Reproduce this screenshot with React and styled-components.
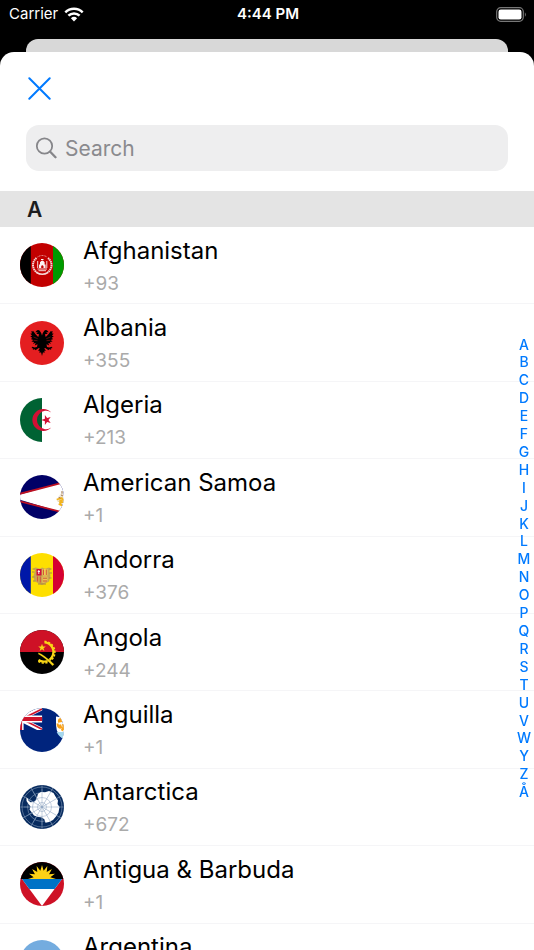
import React, { useState } from 'react';
import styled, { createGlobalStyle } from 'styled-components';

const GlobalStyle = createGlobalStyle`
  * {
    box-sizing: border-box;
  }

  body {
    margin: 0;
    background: #000;
    font-family: Inter, 'Liberation Sans', sans-serif;
    -webkit-font-smoothing: antialiased;
  }

  button, input {
    font-family: inherit;
  }
`;

const Screen = styled.div`
  display: flex;
  flex-direction: column;
  height: 100vh;
  overflow: hidden;
  background: #000;
`;

const StatusBar = styled.header`
  display: grid;
  grid-template-columns: 1fr auto 1fr;
  align-items: center;
  flex: none;
  height: 39px;
  padding: 0 7px 11px 9px;
  color: #fff;
  font-size: 15px;
  line-height: 18px;
`;

const Carrier = styled.div`
  display: flex;
  align-items: center;
  gap: 6px;
`;

const Clock = styled.time`
  font-weight: 600;
`;

const Battery = styled.div`
  display: flex;
  justify-content: flex-end;
`;

const BackCard = styled.div`
  flex: none;
  height: 13px;
  margin: 0 26px;
  border-radius: 12px 12px 0 0;
  background: #d8d8d8;
`;

const Sheet = styled.main`
  display: flex;
  flex-direction: column;
  flex: 1;
  min-height: 0;
  overflow: hidden;
  border-radius: 14px 14px 0 0;
  background: #fff;
`;

const Toolbar = styled.div`
  display: flex;
  align-items: center;
  flex: none;
  height: 73px;
  padding: 0 26px;
`;

const CloseButton = styled.button`
  display: flex;
  padding: 2px;
  border: 0;
  background: none;
  color: #007aff;
  cursor: pointer;
`;

const SearchBox = styled.label`
  display: flex;
  align-items: center;
  flex: none;
  gap: 8px;
  height: 46px;
  margin: 0 26px 20px;
  padding: 0 9px;
  border-radius: 13px;
  background: #eeeeef;
  color: #86868a;
`;

const SearchInput = styled.input`
  flex: 1;
  min-width: 0;
  padding: 0;
  border: 0;
  outline: none;
  background: none;
  color: #000;
  font-size: 21px;

  &::placeholder {
    color: #8a8a8e;
    opacity: 1;
  }
`;

const ListArea = styled.div`
  position: relative;
  flex: 1;
  min-height: 0;
`;

const Scroller = styled.div`
  height: 100%;
  overflow-y: auto;
  scrollbar-width: none;
`;

const SectionHeader = styled.h2`
  position: sticky;
  top: 0;
  margin: 0;
  padding: 2px 27px 0;
  background: #e4e4e4;
  color: #1c1c1e;
  font-size: 21px;
  font-weight: 600;
  line-height: 34px;
`;

const CountryList = styled.ul`
  display: grid;
  grid-template-rows: repeat(10, 1fr);
  height: 774px;
  margin: 0;
  padding: 0;
  list-style: none;
`;

const CountryRow = styled.button`
  display: flex;
  align-items: center;
  gap: 19px;
  width: 100%;
  height: 100%;
  padding: 0 20px;
  border: 0;
  border-bottom: 1px solid #f5f5f7;
  background: none;
  text-align: left;
  cursor: pointer;
`;

const CountryText = styled.span`
  display: flex;
  flex-direction: column;
  gap: 4px;
  padding-top: 3px;
`;

const CountryName = styled.span`
  color: #000;
  font-size: 24px;
  line-height: 30px;
`;

const DialCode = styled.span`
  color: #aaa;
  font-size: 19px;
  line-height: 28px;
`;

const FlagSvg = styled.svg`
  flex: none;
  width: 44px;
  height: 44px;
  border-radius: 50%;
`;

const IndexNav = styled.nav`
  position: absolute;
  top: 50%;
  right: 0;
  display: flex;
  flex-direction: column;
  justify-content: space-between;
  width: 20px;
  height: 468px;
  padding-bottom: 4px;
  transform: translateY(-50%);
`;

const IndexLink = styled.a`
  color: #007aff;
  font-size: 14px;
  font-weight: 500;
  line-height: 16px;
  text-align: center;
  text-decoration: none;
`;

const polar = (cx, cy, r, deg) => {
  const a = (deg * Math.PI) / 180;
  return [cx + r * Math.cos(a), cy + r * Math.sin(a)];
};

const starPoints = (cx, cy, outer, inner, count, start) =>
  Array.from({ length: count * 2 }, (_, i) =>
    polar(cx, cy, i % 2 ? inner : outer, start + (i * 180) / count).join(',')
  ).join(' ');

const Afghanistan = () => (
  <>
    <rect width="44" height="44" fill="#c20000" />
    <rect width="10.8" height="44" fill="#000" />
    <rect x="33" width="11" height="44" fill="#009a00" />
    <g fill="none" stroke="#fff">
      <path d="M16.5 15A8.9 8.9 0 0 0 17 29.5M28 15A8.9 8.9 0 0 1 27.5 29.5" strokeWidth="2" strokeDasharray="1.5 .5" opacity=".85" />
      <path d="M17.5 14Q22.3 11 27 14" strokeWidth="1" strokeDasharray="1 .6" opacity=".6" />
      <path d="M16.5 29.5Q22.3 33 28 29.5" strokeWidth="1.5" opacity=".85" />
      <path d="M17.5 26H27M18.5 27.7H26M17.7 18V25M26.8 18V25" strokeWidth="1" opacity=".85" />
    </g>
    <path d="M19 25V21.5H20V19.3Q22.3 15.5 24.6 19.3V21.5H25.6V25H23.5V23Q22.3 21.7 21.2 23V25Z" fill="#fff" opacity=".95" />
    <path d="M21 16.5H23.5" stroke="#fff" />
  </>
);

const Albania = () => (
  <>
    <rect width="44" height="44" fill="#e41e20" />
    <g id="eagle-half">
      <path d="M22 14.5Q21.4 11.5 19.5 9.4Q17.8 8.3 16.3 10L15.3 11.2L17.8 11.2L16.3 13L18.8 13Q19 15 18.2 16Q15.3 13.5 13.5 10.2L11 10.5L12.2 12.2L10.3 12.8L12.2 14.5L10.3 15.2L12.4 16.9L10.7 17.9L13.3 19L11.4 20.5L14.2 20.9L12.8 22.8L15.7 22.1L14.8 24.5L17.5 23.2L17 26L14.5 26.5L12.5 25.7L11.5 27L13.3 27.4L12.7 28.7L14.9 28.2L15.5 29.3L18.7 27L19.8 27.5L18 29.8L19.6 29.7L19.5 32L21 31.3L22 35Z" fill="#000" />
      <path d="M13.5 16L17.7 17.7M13.5 19.3L17.5 19.7" stroke="#e41e20" strokeWidth=".4" />
    </g>
    <use href="#eagle-half" transform="matrix(-1 0 0 1 44 0)" />
  </>
);

const Algeria = () => (
  <>
    <rect width="44" height="44" fill="#fff" />
    <rect width="22" height="44" fill="#006233" />
    <path d="M31.3 14.4A11 11 0 1 0 31.3 29.6A9.2 9.2 0 1 1 31.3 14.4Z" fill="#d21034" />
    <polygon points={starPoints(26.5, 22, 5.2, 2, 5, 180)} fill="#d21034" />
  </>
);

const AmericanSamoa = () => (
  <>
    <rect width="44" height="44" fill="#006" />
    <path d="M-9 22L44 7V38Z" fill="#fff" />
    <path d="M-6 20.3L44 7.3M-6 24.8L44 37.7" stroke="#bd1021" strokeWidth="1.8" />
    <path d="M36.5 24.5L39 23L39.5 20.3L41 18.5L42 15.8L43 18L42.8 22L44 24V28L41.5 27L42 30.5L38.5 28.7L39.5 27L37.5 26.7Z" fill="#eee3cf" />
    <path d="M36.7 24.5L41.8 23L43 25L40.5 25.5L42.8 27.2L39.8 27L41.8 30.5L38.7 29" fill="none" stroke="#f2b41d" strokeWidth="1.5" />
    <path d="M42 16V18.5M38.5 22.3L40.5 23M41 20L43 21" stroke="#8b5a32" strokeWidth=".8" />
  </>
);

const Andorra = () => (
  <>
    <rect width="44" height="44" fill="#fedf00" />
    <rect width="10.8" height="44" fill="#0018a8" />
    <rect x="33" width="11" height="44" fill="#d50032" />
    <path d="M15 18Q12.5 14.5 16 14.5L20 15.8L22 14.5L25 15.8L29 14.5Q31.5 15 29.5 18L30.5 23L29 28.5L25 30.5L22 32L18.5 30.5L14.5 28L13.3 23Z" fill="#c9a551" />
    <path d="M12.5 16H14.5M12 19H14.5M12 24H14.5M13 28H15.5M29.5 16H31.5M29.5 20H32M29 25H31.5M18 31H26" stroke="#a98743" strokeWidth="1.2" />
    <rect x="16.5" y="16" width="5" height="6.5" fill="#d0103a" />
    <path d="M17.7 18.5H20M18.8 17V21" stroke="#fff" strokeWidth=".9" />
    <rect x="22.5" y="16" width="5" height="6.5" fill="#f0cf55" />
    <path d="M23.5 16.5V22M26.3 16.5V22M17.5 23.5V28.5M20.3 23.5V29.5" stroke="#d8553a" strokeWidth="1" />
    <path d="M22.5 23.5H27.5V28.5L22.5 30Z" fill="#efc552" />
    <path d="M23 25.2H27M23 28H27" stroke="#c7573d" strokeWidth="1" />
  </>
);

const Angola = () => (
  <>
    <rect width="44" height="44" fill="#000" />
    <rect width="44" height="22" fill="#ce1126" />
    <path d="M24.5 12.4A9.6 9.6 0 1 1 18.5 30" fill="none" stroke="#f9d616" strokeWidth="2.2" />
    <path d="M24.5 11.4A10.8 10.8 0 1 1 17.8 31" fill="none" stroke="#f9d616" strokeWidth="1.6" strokeDasharray="2.2 1.5" />
    <path d="M18.5 22.5Q24 24.5 34.3 34.2L32.5 36Q25.5 28 18 24Z" fill="#f9d616" stroke="#000" strokeWidth=".3" />
    <polygon points={starPoints(22, 17.7, 4, 1.6, 5, -90)} fill="#f9d616" />
  </>
);

const Anguilla = () => (
  <>
    <rect width="44" height="44" fill="#00247d" />
    <svg width="22.3" height="22" viewBox="0 0 22.3 22">
      <path d="M-22 0L22 22M22 0L-22 22" stroke="#fff" strokeWidth="4.4" />
      <path d="M-22 -.8L22 21.2M22 1L-22 23" stroke="#cf142b" strokeWidth="1.6" />
      <path d="M0 11H22.3M0 0V22" stroke="#fff" strokeWidth="7.2" />
      <path d="M0 11H22.3M0 0V22" stroke="#cf142b" strokeWidth="4.2" />
    </svg>
    <path d="M36 8.5Q40 9.5 44 8V31Q36.5 27 36 17Z" fill="#fff" />
    <path d="M36.7 24H44V31Q38.5 28.5 36.7 24Z" fill="#a5d8ee" />
    <path d="M43 10.5Q38.5 11 39 13.5L42 13M37.5 15.5Q38 20 41 19.5L40 16.5M41.5 22.5Q44.5 20.5 43 16" fill="none" stroke="#f9a21b" strokeWidth="2.2" />
  </>
);

const Antarctica = () => (
  <>
    <rect width="44" height="44" fill="#072b5f" />
    <g fill="none" stroke="#9db1cb" strokeWidth=".5">
      <circle cx="22" cy="22" r="20" />
      <circle cx="22" cy="22" r="14.5" />
      {[0, 30, 60, 90, 120, 150].map((deg) => (
        <path key={deg} d="M0 22H44" transform={`rotate(${deg} 22 22)`} />
      ))}
    </g>
    <path d="M6.5 12.5L8 13.5L8.3 15.5L10.5 17.2L13.5 17L15.5 15.5L17 12.5L18 8.8L21 7L25 7.3L29 6L33.5 8L35.5 11.5L38 15.5L37.5 19L39.5 22L38.5 27.5L36 31.5L33 35L29 37L25.5 37.8L24.5 34.5L22 32.5L17.5 31.8L14 30.5L11.8 27.5L9.5 24.5L10.5 21.5L8.5 19L6.5 16Z" fill="#fff" />
    <g fill="none" stroke="#7f98b9" strokeWidth=".45">
      <circle cx="22" cy="22" r="4.5" />
      <circle cx="22" cy="22" r="9.5" />
      {[0, 30, 60, 90, 120, 150].map((deg) => (
        <path key={deg} d="M4 22H40" transform={`rotate(${deg} 22 22)`} />
      ))}
    </g>
  </>
);

const Antigua = () => (
  <>
    <rect width="44" height="44" fill="#ce1126" />
    <path d="M2 17H42L22 44Z" fill="#fff" />
    <path d="M0 0H44V17H0Z" fill="#000" />
    <path d="M2 17H42L34.6 27H9.4Z" fill="#0072c6" />
    <svg width="44" height="17" viewBox="0 0 44 17">
      <polygon points={starPoints(22, 17, 14, 8.5, 16, -90)} fill="#fcd116" />
    </svg>
  </>
);

const Argentina = () => (
  <>
    <rect width="44" height="44" fill="#74acdf" />
    <rect y="14.7" width="44" height="14.6" fill="#fff" />
    <circle cx="22" cy="22" r="4" fill="#f6b40e" />
  </>
);

const countries = [
  { name: 'Afghanistan', code: '+93', Flag: Afghanistan },
  { name: 'Albania', code: '+355', Flag: Albania },
  { name: 'Algeria', code: '+213', Flag: Algeria },
  { name: 'American Samoa', code: '+1', Flag: AmericanSamoa },
  { name: 'Andorra', code: '+376', Flag: Andorra },
  { name: 'Angola', code: '+244', Flag: Angola },
  { name: 'Anguilla', code: '+1', Flag: Anguilla },
  { name: 'Antarctica', code: '+672', Flag: Antarctica },
  { name: 'Antigua & Barbuda', code: '+1', Flag: Antigua },
  { name: 'Argentina', code: '+54', Flag: Argentina },
];

const letters = [...'ABCDEFGHIJKLMNOPQRSTUVWYZÅ'];

const WifiIcon = () => (
  <svg width="20" height="15" viewBox="0 0 20 15" aria-hidden="true">
    <g fill="none" stroke="#fff" strokeWidth="2.5">
      <path d="M1.3 5.4A12.4 12.4 0 0 1 18.7 5.4" />
      <path d="M4.4 8.7A8 8 0 0 1 15.6 8.7" />
    </g>
    <path d="M6.9 11.3A4.5 4.5 0 0 1 13.1 11.3L10 14.5Z" fill="#fff" />
  </svg>
);

const BatteryIcon = () => (
  <svg width="31" height="15" viewBox="0 0 31 15" aria-hidden="true">
    <rect x=".7" y=".7" width="26.6" height="13.6" rx="4" fill="none" stroke="#777" strokeWidth="1.2" />
    <rect x="2.5" y="2.5" width="23" height="10" rx="2.3" fill="#fff" />
    <path d="M28.9 5.2Q30.8 7.5 28.9 9.8Z" fill="#777" />
  </svg>
);

const CloseIcon = () => (
  <svg width="23" height="23" viewBox="0 0 23 23" aria-hidden="true">
    <path d="M1.3 1.3L21.7 21.7M21.7 1.3L1.3 21.7" stroke="currentColor" strokeWidth="2" strokeLinecap="round" />
  </svg>
);

const SearchIcon = () => (
  <svg width="22" height="22" viewBox="0 0 22 22" fill="none" stroke="currentColor" aria-hidden="true">
    <circle cx="9.5" cy="9" r="7.7" strokeWidth="1.8" />
    <path d="M15.2 14.7L20.5 20.2" strokeWidth="2.3" strokeLinecap="round" />
  </svg>
);

const Country = ({ country }) => {
  const { name, code, Flag } = country;

  return (
    <li>
      <CountryRow type="button">
        <FlagSvg viewBox="0 0 44 44" aria-hidden="true">
          <Flag />
        </FlagSvg>
        <CountryText>
          <CountryName>{name}</CountryName>
          <DialCode>{code}</DialCode>
        </CountryText>
      </CountryRow>
    </li>
  );
};

const App = () => {
  const [query, setQuery] = useState('');

  const visible = countries.filter((country) =>
    country.name.toLowerCase().includes(query.toLowerCase())
  );

  return (
    <Screen>
      <GlobalStyle />
      <StatusBar>
        <Carrier>
          Carrier
          <WifiIcon />
        </Carrier>
        <Clock>4:44 PM</Clock>
        <Battery>
          <BatteryIcon />
        </Battery>
      </StatusBar>
      <BackCard />
      <Sheet>
        <Toolbar>
          <CloseButton type="button" aria-label="Close">
            <CloseIcon />
          </CloseButton>
        </Toolbar>
        <SearchBox>
          <SearchIcon />
          <SearchInput
            type="text"
            placeholder="Search"
            aria-label="Search"
            value={query}
            onChange={(e) => setQuery(e.target.value)}
          />
        </SearchBox>
        <ListArea>
          <Scroller>
            <SectionHeader id="section-A">A</SectionHeader>
            <CountryList>
              {visible.map((country) => (
                <Country key={country.name} country={country} />
              ))}
            </CountryList>
          </Scroller>
          <IndexNav aria-label="Sections">
            {letters.map((letter) => (
              <IndexLink key={letter} href={`#section-${letter}`}>
                {letter}
              </IndexLink>
            ))}
          </IndexNav>
        </ListArea>
      </Sheet>
    </Screen>
  );
};

export default App;
